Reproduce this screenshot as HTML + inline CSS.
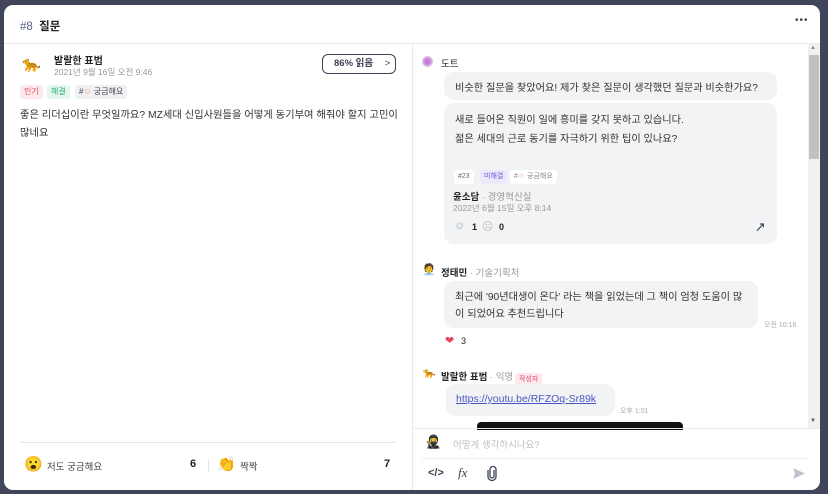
<!DOCTYPE html>
<html><head><meta charset="utf-8">
<style>
*{margin:0;padding:0;box-sizing:border-box}
body{width:828px;height:494px;background:#41455a;font-family:"Liberation Sans","Noto Sans CJK KR",sans-serif;color:#222;position:relative;overflow:hidden}
.card{position:absolute;left:4px;top:5px;width:816px;height:485px;background:#fff;border-radius:9px;overflow:hidden}
.a{position:absolute;white-space:nowrap}
.tag{position:absolute;height:14px;font-size:8px;line-height:14px;padding:0 4px;border-radius:3px}
.bub{position:absolute;background:#f2f3f5;border-radius:10px}
</style></head><body>
<div class="card">
 <div class="a" style="left:16px;top:13px;font-size:11.5px;font-weight:bold"><span style="color:#5a5f80;font-weight:normal">#8</span>&nbsp; 질문</div>
 <div class="a" style="left:791px;top:10px;font-size:10px;letter-spacing:1px;color:#444">•••</div>
 <div style="position:absolute;left:0;top:38px;width:816px;height:1px;background:#e8e8ea"></div>
 <div style="position:absolute;left:408px;top:39px;width:1px;height:446px;background:#e8e8ea"></div>

 <div class="a" style="left:18px;top:50px;font-size:15px">🐆</div>
 <div class="a" style="left:50px;top:47px;font-size:10px;font-weight:bold">발랄한 표범</div>
 <div class="a" style="left:50px;top:61px;font-size:8.5px;color:#999">2021년 9월 16일 오전 9:46</div>
 <div class="a" style="left:318px;top:49px;width:74px;height:20px;border:1.5px solid #3d4254;border-radius:6px;font-size:9.5px;line-height:17px;color:#3d4254;font-weight:bold;padding-left:11px">86% 읽음 <span style="font-weight:normal;margin-left:9px">&gt;</span></div>
 <div class="tag" style="left:16px;top:80px;background:#fde8ec;color:#e04868">인기</div>
 <div class="tag" style="left:43px;top:80px;background:#e3f7ef;color:#2bb07a">해결</div>
 <div class="tag" style="left:71px;top:80px;background:#eef0f3;color:#444">#<span style="color:#f4a37a">☺</span> 궁금해요</div>
 <div class="a" style="left:16px;top:102px;font-size:10.3px;line-height:18px;color:#333">좋은 리더십이란 무엇일까요? MZ세대 신입사원들을 어떻게 동기부여 해줘야 할지 고민이<br>많네요</div>
 <div style="position:absolute;left:16px;top:437px;width:376px;height:1px;background:#e5e5e7"></div>
 <div class="a" style="left:20px;top:450px;font-size:15px">😮</div>
 <div class="a" style="left:43px;top:454px;font-size:9.5px;color:#444">저도 궁금해요</div>
 <div class="a" style="left:186px;top:453px;font-size:11px;font-weight:bold">6</div>
 <div style="position:absolute;left:204px;top:454px;width:1px;height:12px;background:#e5e5e7"></div>
 <div class="a" style="left:213px;top:450px;font-size:15px">👏</div>
 <div class="a" style="left:236px;top:454px;font-size:9.5px;color:#444">짝짝</div>
 <div class="a" style="left:380px;top:453px;font-size:11px;font-weight:bold">7</div>

 <div style="position:absolute;left:418px;top:51px;width:11px;height:11px;border-radius:50%;background:radial-gradient(circle,#c27fd6 30%,#e6c8ee 70%)"></div>
 <div class="a" style="left:437px;top:51px;font-size:9.5px">도트</div>
 <div class="bub" style="left:440px;top:67px;width:333px;height:28px"></div>
 <div class="a" style="left:451px;top:74px;font-size:10.2px;color:#333">비슷한 질문을 찾았어요! 제가 찾은 질문이 생각했던 질문과 비슷한가요?</div>
 <div class="bub" style="left:440px;top:98px;width:333px;height:141px"></div>
 <div class="a" style="left:451px;top:106px;font-size:10.2px;line-height:19px;color:#333">새로 들어온 직원이 일에 흥미를 갖지 못하고 있습니다.<br>젊은 세대의 근로 동기를 자극하기 위한 팁이 있나요?</div>
 <div class="tag" style="left:450px;top:165px;background:#fff;color:#666;font-size:7px">#23</div>
 <div class="tag" style="left:476px;top:165px;background:#ebe8fb;color:#6b5bd6;font-size:7px">미해결</div>
 <div class="tag" style="left:506px;top:165px;background:#fff;color:#888;font-size:7px">#<span style="color:#f4a37a">☺</span> 궁금해요</div>
 <div class="a" style="left:449px;top:184px;font-size:9.5px;font-weight:bold">윤소담 <span style="font-weight:normal;color:#999">· 경영혁신실</span></div>
 <div class="a" style="left:449px;top:197px;font-size:8.5px;color:#999">2022년 6월 15일 오후 8:14</div>
 <div class="a" style="left:450px;top:215px;font-size:11px;color:#9aa">☺</div>
 <div class="a" style="left:468px;top:217px;font-size:9px;font-weight:bold">1</div>
 <div class="a" style="left:478px;top:215px;font-size:11px;color:#bbb">☹</div>
 <div class="a" style="left:495px;top:217px;font-size:9px;font-weight:bold">0</div>
 <div class="a" style="left:751px;top:214px;font-size:11px;color:#3d4254;font-weight:bold">↗</div>

 <div class="a" style="left:418px;top:258px;font-size:11px">🧑‍💼</div>
 <div class="a" style="left:437px;top:260px;font-size:9.5px;font-weight:bold">정태민 <span style="font-weight:normal;color:#999">· 기술기획처</span></div>
 <div class="bub" style="left:440px;top:276px;width:314px;height:47px"></div>
 <div class="a" style="left:451px;top:284px;font-size:10.2px;line-height:17px;color:#333">최근에 '90년대생이 온다' 라는 책을 읽었는데 그 책이 엄청 도움이 많<br>이 되었어요 추천드립니다</div>
 <div class="a" style="left:760px;top:315px;font-size:7px;color:#aaa">오전 10:16</div>
 <div class="a" style="left:441px;top:329px;font-size:11px;color:#e0455a">❤</div>
 <div class="a" style="left:457px;top:331px;font-size:9px">3</div>

 <div class="a" style="left:419px;top:363px;font-size:10px">🐆</div>
 <div class="a" style="left:437px;top:364px;font-size:9.5px;font-weight:bold">발랄한 표범 <span style="font-weight:normal;color:#999">· 익명</span></div>
 <div class="tag" style="left:511px;top:368px;background:#fde8ec;color:#e04868;font-size:7px">작성자</div>
 <div class="bub" style="left:442px;top:379px;width:169px;height:32px"></div>
 <div class="a" style="left:452px;top:388px;font-size:10.5px;color:#4a55c4;text-decoration:underline">https://youtu.be/RFZOq-Sr89k</div>
 <div class="a" style="left:616px;top:401px;font-size:7px;color:#aaa">오후 1:01</div>
 <div style="position:absolute;left:473px;top:417px;width:206px;height:8px;background:#111;border-radius:4px 4px 0 0"></div>

 <div style="position:absolute;left:804px;top:39px;width:12px;height:384px;background:#f1f1f1"></div>
 <div style="position:absolute;left:805px;top:50px;width:10px;height:104px;background:#c1c1c1"></div>
 <div class="a" style="left:806px;top:40px;font-size:6px;color:#888">▲</div>
 <div class="a" style="left:806px;top:413px;font-size:6px;color:#555">▼</div>

 <div style="position:absolute;left:409px;top:423px;width:407px;height:1px;background:#e8e8ea"></div>
 <div class="a" style="left:421px;top:429px;font-size:13px">🥷</div>
 <div class="a" style="left:449px;top:432px;font-size:9.5px;color:#c0c0c0">어떻게 생각하시나요?</div>
 <div style="position:absolute;left:418px;top:453px;width:386px;height:1px;background:#ececee"></div>
 <div class="a" style="left:424px;top:462px;font-size:11px;color:#3d4254;font-weight:bold">&lt;/&gt;</div>
 <div class="a" style="left:454px;top:460px;font-size:13px;color:#3d4254;font-family:'Liberation Serif',serif;font-style:italic">fx</div>
 <svg style="position:absolute;left:482px;top:461px" width="12" height="15" viewBox="0 0 12 15"><path d="M8 4 V10 A2 2 0 0 1 4 10 V3.5 A3 3 0 0 1 10 3.5 V10.5 A4 4 0 0 1 2 10.5 V4" fill="none" stroke="#3d4254" stroke-width="1.3"/></svg>
 <svg style="position:absolute;left:788px;top:462px" width="14" height="13" viewBox="0 0 14 13"><path d="M1 1 L13 6.5 L1 12 L3 6.5 Z" fill="#bfc3cc"/></svg>
</div>
</body></html>
